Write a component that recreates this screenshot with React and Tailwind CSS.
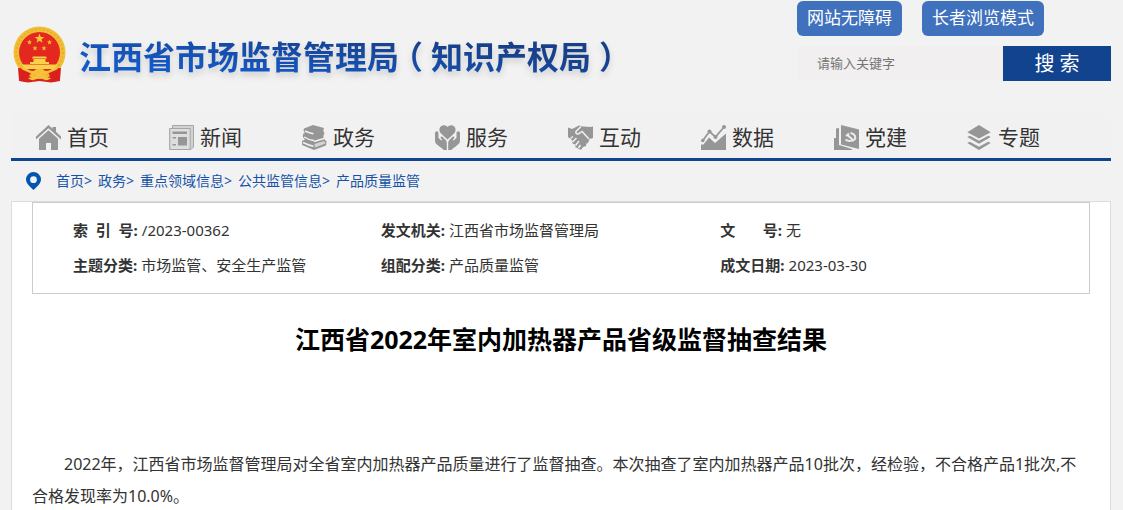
import React from 'react'

const HomeIcon = () => (
  <svg viewBox="0 0 25 25" className="h-[25px] w-[25px] shrink-0" fill="#969696" aria-hidden="true">
    <path d="M12.5 0 0 11.4v3L12.5 3.2 25 14.4v-3L20 6.8V2h-3.5v1.7z" />
    <path d="M12.5 5.2 3 13.8V25h7v-7h5v7h7V13.8z" />
  </svg>
)

const NewsIcon = () => (
  <svg viewBox="0 0 25 25" className="h-[25px] w-[25px] shrink-0" aria-hidden="true">
    <path d="M3.5 .5h21v21.5l-2.500 2.500H.8V3.500h2.700z" fill="#d2d2d2" stroke="#a6a6a6" />
    <path d="M.8 3.500h20.400v21H.8z" fill="#dedede" stroke="#a6a6a6" />
    <path d="M3.500 6.500h14.500v2.500H3.500zM9 12h9v8.500H9zM3.500 12H7v1.500H3.500zM3.500 19H7v1.500H3.500z" fill="#969696" />
  </svg>
)

const BooksIcon = () => (
  <svg viewBox="0 0 25 25" className="h-[25px] w-[25px] shrink-0" aria-hidden="true">
    <path d="M2 3.500 11 0l11 3c-1 2-.5 4 .5 5.500-1.500 2-1.500 4 0 6l2 2-.5 4L12 25 0 20v-4l3-1.500C1 13 0 11 1.500 8.500L3 8C1.500 6.500 1.300 5 2 3.500z" fill="#969696" />
    <path d="M3 6c3 1.500 5 2.300 8.500 2.700M2 12c3 2 6 3 10 3.500M12 16.500 22 13.500M1 17.500c4 2 7 3 10.500 3.800" fill="none" stroke="#f1f1f1" strokeWidth="1.400" />
    <path d="m12.500 19 9.500-3 1.500 2.500L13 22.500z" fill="#d4d4d4" />
  </svg>
)

const ServiceIcon = () => (
  <svg viewBox="0 0 25 25" className="h-[25px] w-[25px] shrink-0" fill="#969696" aria-hidden="true">
    <path d="M12.500 14.500 6 8.500C3 5.500 4.500 .2 8.800 .2c1.600 0 2.900.7 3.700 1.800C13.300.9 14.600.2 16.200.2c4.300 0 5.800 5.300 2.800 8.300z" />
    <path d="M1.300 6.500C2.500 6 3.500 7 3.500 8.500V13l3 2.500.8-.6-1.600-2c-.6-1 .6-2 1.700-1.200l3 3c1 1 1.400 2 1.400 3.500V25H8.500c-1-1.500-2-2-3.500-3L2 19.500C.6 18.500 0 17 0 15V8c0-.8.5-1.300 1.300-1.500z" />
    <path d="M23.700 6.500C22.500 6 21.500 7 21.500 8.500V13l-3 2.500-.8-.6 1.600-2c.6-1-.6-2-1.700-1.200l-3 3c-1 1-1.400 2-1.400 3.500V25h3.300c1-1.500 2-2 3.500-3l3-2.500c1.400-1 2-2.500 2-4.500V8c0-.8-.5-1.300-1.300-1.500z" />
  </svg>
)

const HandshakeIcon = () => (
  <svg viewBox="0 0 25 25" className="h-[25px] w-[25px] shrink-0" aria-hidden="true">
    <path d="M0 2.500 4 4l7-3.500 4 1L22 2l3-.5V13l-3.500 1-1.500 4-1.500.5L18 21l-3 1-1.500 2.500h-2L9.500 23l-2-.5-.5-3-2.500-1-.5-3.500L0 12z" fill="#969696" />
    <path d="M13 1.500 8 6.500c-.8 2 1 3 3 2l3-2 7 7.500M2.500 13.500l2.500-2M4.500 17l4-4M7.500 20.500l3.500-4.500M10.500 23l2-3" fill="none" stroke="#f1f1f1" strokeWidth="1.500" />
  </svg>
)

const ChartIcon = () => (
  <svg viewBox="0 0 25 25" className="h-[25px] w-[25px] shrink-0" aria-hidden="true">
    <path d="M0 19.500h2.500L8 12.500l6 5.500L25 8.500V25H0z" fill="#969696" />
    <path d="m1.800 15.500 6.700-9 6 5.500L23 2" fill="none" stroke="#969696" strokeWidth="1.800" />
    <circle cx="1.800" cy="15.500" r="1.800" fill="#969696" />
    <circle cx="8.500" cy="6.500" r="2" fill="#969696" />
    <circle cx="14.500" cy="12" r="2" fill="#969696" />
    <circle cx="23" cy="2" r="2" fill="#969696" />
  </svg>
)

const PartyIcon = () => (
  <svg viewBox="0 0 25 25" className="h-[25px] w-[25px] shrink-0" aria-hidden="true">
    <path d="M2 3.500 5 3v17l13 4v1H0V13h2z" fill="#969696" />
    <path d="m7 0 18 4.500V24L7 19.500z" fill="#969696" />
    <path d="M16.500 8c4 .5 6 4 4 7M12 11l3-2.500M13.500 10l6.500 6M11.500 14.500c2.500 2 5.500 2 8.500 0" fill="none" stroke="#ececec" strokeWidth="2" />
  </svg>
)

const LayersIcon = () => (
  <svg viewBox="0 0 25 25" className="h-[25px] w-[25px] shrink-0" fill="#969696" aria-hidden="true">
    <path d="m12 0 11.700 7.200L12 13.500.3 7.200z" />
    <path d="m.3 12 2.500-1.300 9.200 5 9.200-5 2.500 1.300L12 18.700z" />
    <path d="m.3 18 2.500-1.300 9.200 5 9.200-5 2.500 1.300L12 25z" />
  </svg>
)

const PinIcon = () => (
  <svg viewBox="0 0 15 18" className="h-[18px] w-[15px] shrink-0" aria-hidden="true">
    <path d="M7.500 0a7.500 7.500 0 0 1 7.500 7.500c0 4-4 7-7.500 10.500C4 14.500 0 11.500 0 7.500A7.500 7.500 0 0 1 7.500 0zm0 4.300a3.400 3.400 0 1 0 0 6.800 3.400 3.400 0 0 0 0-6.800z" fill="#0355b0" />
  </svg>
)

const Emblem = () => (
  <svg viewBox="0 0 53 57" className="h-[57px] w-[53px] shrink-0" role="img" aria-label="国徽">
    <path d="m8 38-2 17 9 1.500 11.500-1.500L38 56.500l9-1.500-2-17z" fill="#d9201c" />
    <circle cx="26.500" cy="26.500" r="26" fill="#f2be35" />
    <circle cx="26.500" cy="26.500" r="23.200" fill="none" stroke="#e9ad28" strokeWidth="2" strokeDasharray="2 2" />
    <circle cx="26.500" cy="26.500" r="20.500" fill="#e5281f" />
    <path d="m26.500 7.500 1.300 3.400 3.600.1-2.900 2.300 1 3.500-3-2-3 2 1-3.500-2.900-2.300 3.600-.1z" fill="#f5c838" />
    <path d="m16.500 13.500.7 1.800 1.900.1-1.500 1.200.5 1.900-1.600-1.100-1.600 1.100.5-1.900-1.500-1.200 1.900-.1zM36.500 13.500l.7 1.800 1.900.1-1.500 1.200.5 1.900-1.600-1.100-1.600 1.100.5-1.900-1.500-1.200 1.900-.1zM22 19.500l.7 1.800 1.900.1-1.500 1.200.5 1.900-1.600-1.100-1.600 1.100.5-1.900-1.500-1.200 1.900-.1zM31 19.500l.7 1.800 1.900.1-1.500 1.200.5 1.900-1.600-1.100-1.600 1.100.5-1.900-1.500-1.200 1.900-.1z" fill="#f0b92f" />
    <path d="M20 30.500h13l1 2H19zM20.500 33h12v3h3.500v2H17v-2h3.500zM8.500 38.500h36l-3.500 4.500H12z" fill="#f8d24a" />
    <path d="M5 42c5 0 9 2 13 4.500L13 56l-7-2zM48 42c-5 0-9 2-13 4.500l5 9.500 7-2z" fill="#d9201c" />
    <path d="M7 40c5 3 10 5 14 5 1-3 10-3 11 0 4 0 9-2 14-5l-2 3.500c-5 2-8 3.500-11 4.500-3 1.500-10 1.500-13 0-3-1-6-2.500-11-4.500zM15 52c4 0 6-3.500 11.500-3.500S34 52 38 52c-2 2-5 3-7 1.500-2-1-7-1-9 0-2 1.500-5 .5-7-1.500z" fill="#f4c13a" />
  </svg>
)

const navItems = [
  { label: '首页', icon: HomeIcon },
  { label: '新闻', icon: NewsIcon },
  { label: '政务', icon: BooksIcon },
  { label: '服务', icon: ServiceIcon },
  { label: '互动', icon: HandshakeIcon },
  { label: '数据', icon: ChartIcon },
  { label: '党建', icon: PartyIcon },
  { label: '专题', icon: LayersIcon },
]

const crumbs = ['首页', '政务', '重点领域信息', '公共监管信息', '产品质量监管']

const meta = [
  { label: '索\u00a0\u00a0引\u00a0\u00a0号:', value: '/2023-00362' },
  { label: '发文机关:', value: '江西省市场监督管理局' },
  { label: '文\u00a0\u00a0\u00a0\u00a0\u00a0\u00a0\u00a0号:', value: '无' },
  { label: '主题分类:', value: '市场监管、安全生产监管' },
  { label: '组配分类:', value: '产品质量监管' },
  { label: '成文日期:', value: '2023-03-30' },
]

// half-width bracket with equal space on both sides
const Bracket = ({ children }) => (
  <span className="mx-2 [font-feature-settings:'halt']">{children}</span>
)

const Header = () => (
  <header className="flex items-start justify-between">
    <a href="#" className="flex items-center gap-[13px] pt-[26px] pl-[2px]">
      <Emblem />
      <span className="bg-[linear-gradient(186deg,#17408a_30%,#1459c8_80%)] bg-clip-text font-['Noto_Sans_CJK_SC',sans-serif] text-[32px] leading-[48px] font-bold whitespace-nowrap text-transparent drop-shadow-[0_4px_3px_rgba(0,0,0,0.15)]">
        江西省市场监督管理局<Bracket>（</Bracket>知识产权局<Bracket>）</Bracket>
      </span>
    </a>
    <div className="w-[314px] shrink-0 pt-px">
      <div className="flex gap-5">
        <button type="button" className="h-[35px] rounded-md bg-[#4071bd] px-[10px] pb-[2px] text-[17px] text-white">网站无障碍</button>
        <button type="button" className="h-[35px] rounded-md bg-[#4071bd] px-[10px] pb-[2px] text-[17px] text-white">长者浏览模式</button>
      </div>
      <form className="mt-[10px] flex h-[35px]" onSubmit={(e) => e.preventDefault()}>
        <input
          type="text"
          aria-label="请输入关键字"
          placeholder="请输入关键字"
          className="min-w-0 flex-1 bg-[#f1eff0] pl-5 text-[13px] outline-none placeholder:text-[#757575]"
        />
        <button type="submit" className="w-[108px] bg-[#12438f] text-[20px] text-white">搜 索</button>
      </form>
    </div>
  </header>
)

const App = () => {
  return (
    <div className="min-h-screen bg-[#f2f2f2] pr-3 pl-[11px] font-['Noto_Sans','Noto_Sans_CJK_SC',sans-serif] text-[#333]">
      <div className="mx-auto max-w-[1100px]">
        <Header />

        <nav className="mt-[31px] grid grid-cols-8 border-b-3 border-[#12438f] bg-[#f1f1f1] pr-9">
          {navItems.map(({ label, icon: Icon }) => (
            <a key={label} href="#" className="flex h-11 items-center gap-[6px] pt-[3px] pl-[25px] text-[21px] whitespace-nowrap">
              <Icon />
              {label}
            </a>
          ))}
        </nav>

        <div className="flex h-10 items-center pb-px pl-[15px] text-[14px] text-[#1552a8]">
          <PinIcon />
          <div className="flex gap-[6px] pl-[15px]">
            {crumbs.map((crumb, i) => (
              <span key={crumb}>
                <a href="#">{crumb}</a>
                {i < crumbs.length - 1 && '>'}
              </span>
            ))}
          </div>
        </div>

        <main className="min-h-[309px] border border-b-0 border-[#dcdcdc] bg-white px-5">
          <dl className="grid grid-cols-[308fr_340fr_369fr] border border-[#ccc] pt-[10px] pb-[10px] pl-10 text-[15px] leading-[35px]">
            {meta.map(({ label, value }) => (
              <div key={label} className="flex gap-1">
                <dt className="font-bold">{label}</dt>
                <dd>{value}</dd>
              </div>
            ))}
          </dl>

          <h1 className="pt-[27px] text-center text-[25px] leading-9 font-bold text-black">
            江西省2022年室内加热器产品省级监督抽查结果
          </h1>

          <p className="pt-[91px] indent-8 text-[16px] leading-8">
            2022年，江西省市场监督管理局对全省室内加热器产品质量进行了监督抽查。本次抽查了室内加热器产品10批次，经检验，不合格产品1批次,不合格发现率为10.0%。
          </p>
        </main>
      </div>
    </div>
  )
}

export default App
